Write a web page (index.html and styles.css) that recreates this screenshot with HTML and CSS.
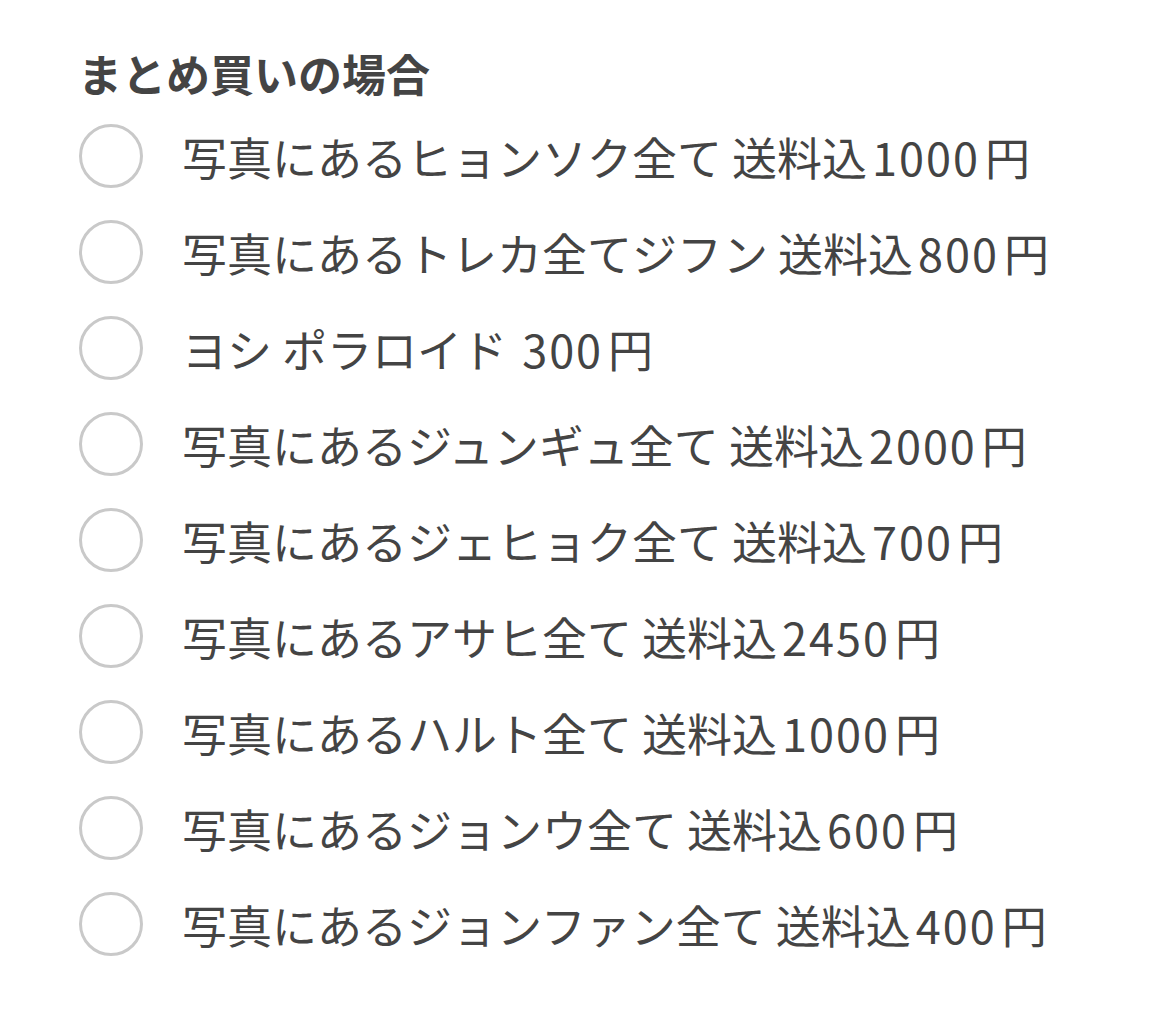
FILE: index.html
```html
<!DOCTYPE html>
<html lang="ja">
<head>
<meta charset="utf-8">
<link rel="stylesheet" href="styles.css">
</head>
<body>
<div class="options">
  <div class="options__title">まとめ買いの場合</div>
  <ul class="options__list">
    <li class="option"><span class="option__radio"></span><span class="option__label">写真にあるヒョンソク全て 送料込<span class="num">1000</span>円</span></li>
    <li class="option"><span class="option__radio"></span><span class="option__label">写真にあるトレカ全てジフン 送料込<span class="num">800</span>円</span></li>
    <li class="option"><span class="option__radio"></span><span class="option__label">ヨシ ポラロイド <span class="num">300</span>円</span></li>
    <li class="option"><span class="option__radio"></span><span class="option__label">写真にあるジュンギュ全て 送料込<span class="num">2000</span>円</span></li>
    <li class="option"><span class="option__radio"></span><span class="option__label">写真にあるジェヒョク全て 送料込<span class="num">700</span>円</span></li>
    <li class="option"><span class="option__radio"></span><span class="option__label">写真にあるアサヒ全て 送料込<span class="num">2450</span>円</span></li>
    <li class="option"><span class="option__radio"></span><span class="option__label">写真にあるハルト全て 送料込<span class="num">1000</span>円</span></li>
    <li class="option"><span class="option__radio"></span><span class="option__label">写真にあるジョンウ全て 送料込<span class="num">600</span>円</span></li>
    <li class="option"><span class="option__radio"></span><span class="option__label">写真にあるジョンファン全て 送料込<span class="num">400</span>円</span></li>
  </ul>
</div>
</body>
</html>
```

FILE: styles.css
```css
html, body {
  margin: 0;
  padding: 0;
  background: #ffffff;
}

body {
  font-family: "Noto Sans CJK JP", "Noto Sans", sans-serif;
  color: #444444;
}

.options {
  padding: 44px 0 0 78px;
}

.options__title {
  font-size: 44px;
  font-weight: 700;
  line-height: 58px;
  margin-bottom: 6px;
}

.options__list {
  list-style: none;
  margin: 0;
  padding: 0;
}

.option {
  display: flex;
  align-items: center;
  height: 96px;
  gap: 39px;
}

.option__radio {
  flex: none;
  box-sizing: border-box;
  width: 64px;
  height: 64px;
  margin-left: 1px;
  border: 3.5px solid #c9c9c9;
  border-radius: 50%;
}

.option__label {
  font-size: 45px;
  line-height: 1;
  white-space: nowrap;
}

/* price digits sit a little apart from the kana around them */
.num {
  margin: 0 5px 0 5px;
  letter-spacing: 2px;
}
```
